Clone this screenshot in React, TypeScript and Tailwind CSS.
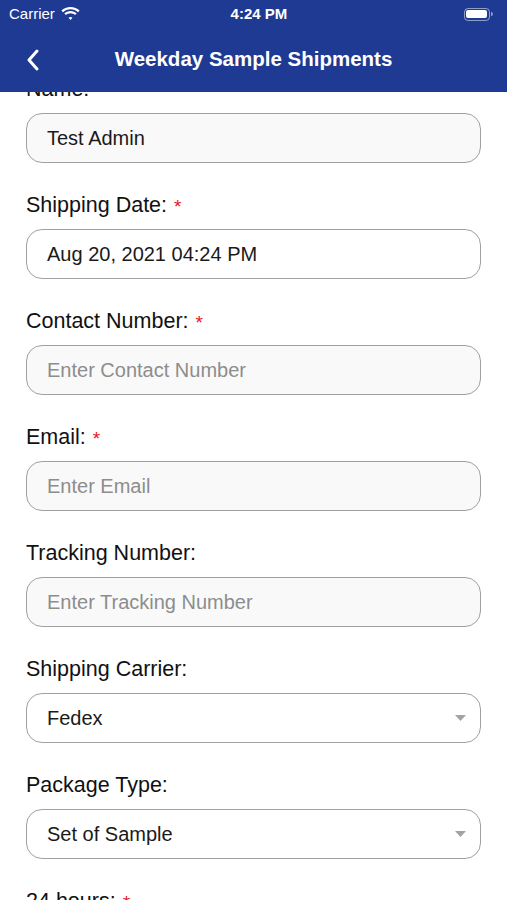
import React from "react";

const font = { fontFamily: '"Liberation Sans", Arial, sans-serif' };

function Wifi() {
  return (
    <svg width="19" height="14" viewBox="0 0 19 14" fill="white">
      <path d="M9.5 2.2c2.9 0 5.5 1.1 7.5 3l1.6-1.7C16.2 1.2 13 0 9.5 0S2.8 1.2.4 3.5L2 5.2c2-1.9 4.6-3 7.5-3z" />
      <path d="M9.5 6.2c1.8 0 3.4.7 4.6 1.8l1.6-1.7C14.1 4.8 11.9 3.9 9.5 3.9S4.9 4.8 3.3 6.3l1.6 1.7c1.2-1.1 2.8-1.8 4.6-1.8z" />
      <path d="M9.5 9.9c.8 0 1.5.3 2 .8L9.5 13l-2-2.3c.5-.5 1.2-.8 2-.8z" />
    </svg>
  );
}

function Battery() {
  return (
    <div className="flex items-center">
      <div className="flex h-[13px] w-[26px] items-center rounded-[4px] border border-white/50 p-[1.5px]">
        <div className="h-full w-full rounded-[2px] bg-white" />
      </div>
      <div className="ml-[1px] h-[4px] w-[2px] rounded-r-sm bg-white/50" />
    </div>
  );
}

function Caret() {
  return (
    <svg width="11" height="6" viewBox="0 0 11 6">
      <path d="M0 0h11L5.5 6z" fill="#a3a3a3" />
    </svg>
  );
}

type Field = {
  label: string;
  required?: boolean;
  value?: string;
  placeholder?: string;
  select?: boolean;
  tint?: boolean;
};

const fields: Field[] = [
  { label: "Name:", value: "Test Admin", tint: true },
  { label: "Shipping Date:", required: true, value: "Aug 20, 2021 04:24 PM" },
  { label: "Contact Number:", required: true, placeholder: "Enter Contact Number", tint: true },
  { label: "Email:", required: true, placeholder: "Enter Email", tint: true },
  { label: "Tracking Number:", placeholder: "Enter Tracking Number", tint: true },
  { label: "Shipping Carrier:", value: "Fedex", select: true },
  { label: "Package Type:", value: "Set of Sample", select: true },
  { label: "24 hours:", required: true, value: "", select: true },
];

function FormGroup({ f }: { f: Field }) {
  return (
    <div className="flex flex-col pb-[30px]">
      <div className="flex h-[24px] items-center text-[21.5px] text-[#111]">
        {f.label}
        {f.required && (
          <span className="ml-[7px] mt-[2px] text-[19px] leading-none text-[#e8141b]">*</span>
        )}
      </div>
      <div
        className={`mt-[12px] flex h-[50px] items-center justify-between rounded-[16px] border-[1.5px] border-[#a0a0a0] pl-[20px] pr-[14px] text-[20px] ${
          f.tint ? "bg-[#f9f9f9]" : "bg-white"
        }`}
      >
        {f.value !== undefined ? (
          <span className="text-[#1a1a1a]">{f.value}</span>
        ) : (
          <span className="text-[#8d8d8d]">{f.placeholder}</span>
        )}
        {f.select && <Caret />}
      </div>
    </div>
  );
}

export default function App() {
  return (
    <div className="relative h-[900px] w-[507px] overflow-hidden bg-white" style={font}>
      {/* Header */}
      <div className="relative z-10 h-[92px] bg-[#1f3a93] text-white">
        <div className="flex h-[28px] items-center justify-between px-[9px]">
          <div className="flex items-center gap-[6px] text-[15px]">
            Carrier
            <Wifi />
          </div>
          <div className="text-[15px] font-semibold">4:24 PM</div>
          <div className="flex w-[60px] justify-end pr-[5px]">
            <Battery />
          </div>
        </div>
        <div className="relative flex h-[64px] items-center justify-center">
          <svg
            className="absolute left-[26px] top-[21px]"
            width="14"
            height="22"
            viewBox="0 0 14 22"
            fill="none"
            stroke="white"
            strokeWidth="3"
            strokeLinecap="round"
            strokeLinejoin="round"
          >
            <path d="M11 2L3 11l8 9" />
          </svg>
          <span className="-mt-[2px] text-[20.5px] font-bold">Weekday Sample Shipments</span>
        </div>
      </div>

      {/* Form */}
      <div className="-mt-[15px] flex flex-col px-[26px]">
        {fields.map((f) => (
          <FormGroup key={f.label} f={f} />
        ))}
      </div>
    </div>
  );
}
